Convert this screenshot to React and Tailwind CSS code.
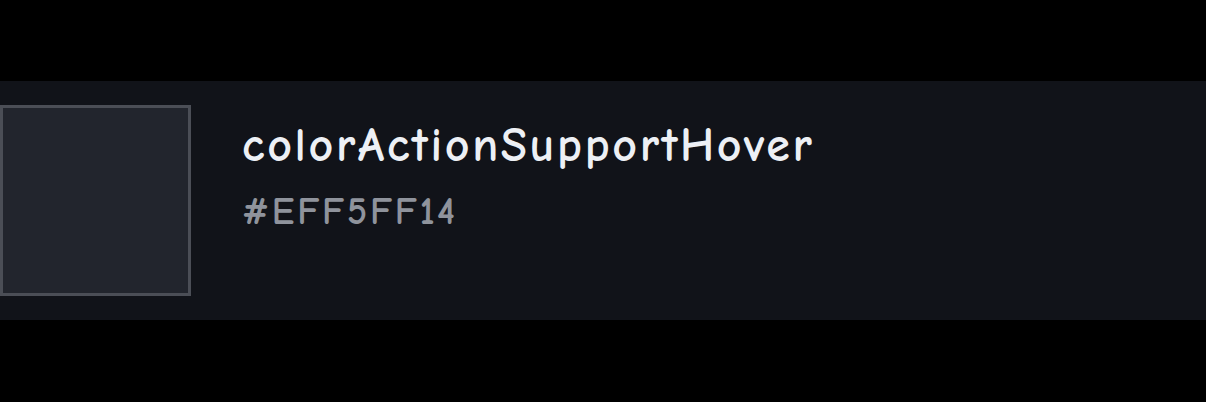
import React from "react";

const token = {
  name: "colorActionSupportHover",
  value: "#EFF5FF14",
};

export default function App() {
  return (
    <div className="w-[1206px] h-[402px] bg-black pt-[81px]">
      <div
        className="flex h-[239px] items-start gap-[51px] bg-[#111319] pt-[24px]"
        style={{ fontFamily: '"Comic Sans MS", "Comic Neue", "DejaVu Sans", sans-serif' }}
      >
        <div className="h-[191px] w-[191px] shrink-0 border-[3px] border-[#4b4e56] bg-[#22252d]" />
        <div className="flex flex-col pt-[13px]">
          <div className="text-[48px] font-bold leading-[56px] tracking-[2.6px] text-[#edf0f5]">
            {token.name}
          </div>
          <div className="mt-[16px] text-[38px] font-bold leading-[44px] tracking-[2.8px] text-[#8f939c]">
            {token.value}
          </div>
        </div>
      </div>
    </div>
  );
}
